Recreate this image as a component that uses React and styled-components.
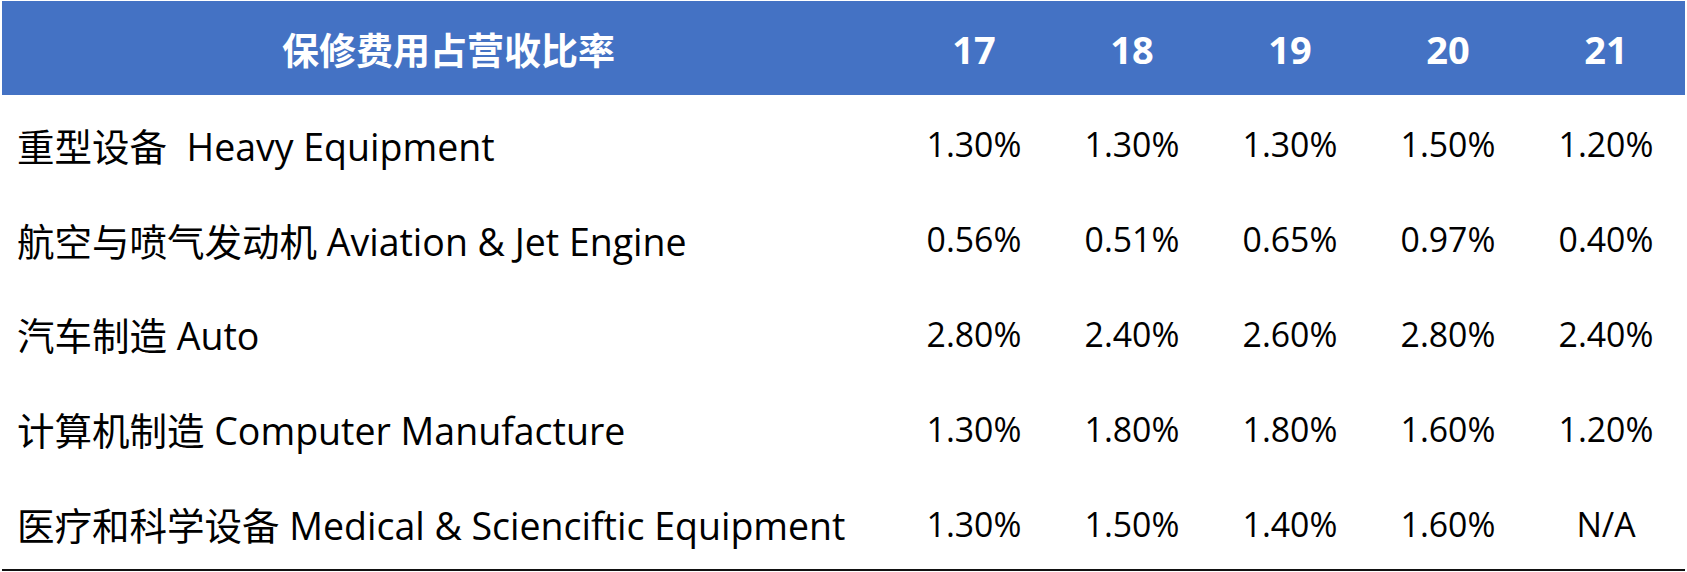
import React from "react";
import styled, { createGlobalStyle } from "styled-components";

const GlobalStyle = createGlobalStyle`
  body {
    margin: 0;
    background: #ffffff;
    font-family: "Open Sans", "Noto Sans CJK SC", sans-serif;
  }
`;

const Page = styled.div`
  padding: 1px 0 0 2px;
`;

const Table = styled.div`
  width: 1683px;
  display: grid;
  grid-template-columns: 893px repeat(5, 158px);
  border-bottom: 2px solid #111;
`;

const HeadCell = styled.div`
  height: 94px;
  background: #4472c4;
  color: #ffffff;
  font-weight: 700;
  font-size: ${({ $title }) => ($title ? "37px" : "38px")};
  display: flex;
  align-items: center;
  justify-content: center;
  padding-top: 2px;
  box-sizing: border-box;
`;

const NameCell = styled.div`
  height: 94.8px;
  display: flex;
  align-items: center;
  padding: 4px 0 0 15px;
  box-sizing: border-box;
  font-size: 37.5px;
  color: #000;
  white-space: pre;
`;

const ValueCell = styled.div`
  height: 94.8px;
  display: flex;
  align-items: center;
  justify-content: center;
  padding-top: 4px;
  box-sizing: border-box;
  font-size: 33.8px;
  color: #000;
`;

const years = ["17", "18", "19", "20", "21"];

const rows = [
  { name: "重型设备  Heavy Equipment", values: ["1.30%", "1.30%", "1.30%", "1.50%", "1.20%"] },
  { name: "航空与喷气发动机 Aviation & Jet Engine", values: ["0.56%", "0.51%", "0.65%", "0.97%", "0.40%"] },
  { name: "汽车制造 Auto", values: ["2.80%", "2.40%", "2.60%", "2.80%", "2.40%"] },
  { name: "计算机制造 Computer Manufacture", values: ["1.30%", "1.80%", "1.80%", "1.60%", "1.20%"] },
  { name: "医疗和科学设备 Medical & Scienciftic Equipment", values: ["1.30%", "1.50%", "1.40%", "1.60%", "N/A"] },
];

export default function App() {
  return (
    <Page>
      <GlobalStyle />
      <Table>
        <HeadCell $title>保修费用占营收比率</HeadCell>
        {years.map((y) => (
          <HeadCell key={y}>{y}</HeadCell>
        ))}
        {rows.map((row) => (
          <React.Fragment key={row.name}>
            <NameCell>{row.name}</NameCell>
            {row.values.map((v, i) => (
              <ValueCell key={i}>{v}</ValueCell>
            ))}
          </React.Fragment>
        ))}
      </Table>
    </Page>
  );
}
